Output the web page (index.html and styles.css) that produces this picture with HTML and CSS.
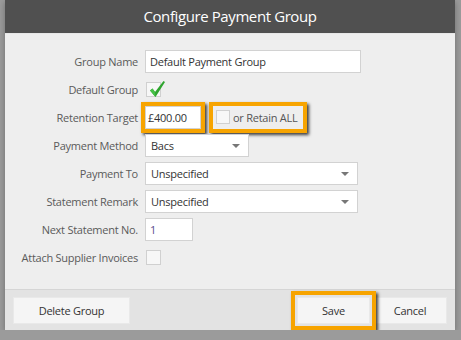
FILE: index.html
```html
<!DOCTYPE html>
<html lang="en">
<head>
  <meta charset="UTF-8">
  <title>Configure Payment Group</title>
  <link rel="stylesheet" href="styles.css">
</head>
<body>
  <div class="dialog">
    <div class="dialog-header">Configure Payment Group</div>

    <div class="dialog-body">
      <div class="form-grid">
        <div class="field-label">Group Name</div>
        <div class="field"><div class="text-input input-name">Default Payment Group</div></div>

        <div class="field-label">Default Group</div>
        <div class="field">
          <span class="checkbox">
            <svg class="tick" width="20" height="20" viewBox="0 0 20 20">
              <path d="M3 10.5 L5.5 8.5 L8 12 L16.5 1 L18 2 L8.5 17 Z" fill="#2fa52f"/>
              <path d="M3 10.5 L5.5 8.5 L8 12 L8.5 17 Z" fill="#46c046"/>
            </svg>
          </span>
        </div>

        <div class="field-label">Retention Target</div>
        <div class="field">
          <span class="highlight"><span class="text-input input-amount">£400.00</span></span>
          <span class="highlight retain-all">
            <span class="checkbox checkbox-small"></span>
            <span class="retain-text">or Retain ALL</span>
          </span>
        </div>

        <div class="field-label">Payment Method</div>
        <div class="field">
          <div class="select select-short">Bacs<span class="caret"></span></div>
        </div>

        <div class="field-label">Payment To</div>
        <div class="field">
          <div class="select select-long">Unspecified<span class="caret"></span></div>
        </div>

        <div class="field-label">Statement Remark</div>
        <div class="field">
          <div class="select select-long">Unspecified<span class="caret"></span></div>
        </div>

        <div class="field-label">Next Statement No.</div>
        <div class="field"><div class="text-input input-number">1</div></div>

        <div class="field-label">Attach Supplier Invoices</div>
        <div class="field"><span class="checkbox"></span></div>
      </div>
    </div>

    <div class="dialog-footer">
      <button class="btn btn-delete">Delete Group</button>
      <div class="footer-right">
        <button class="btn btn-save">Save</button>
        <button class="btn btn-cancel">Cancel</button>
      </div>
    </div>
  </div>
</body>
</html>
```

FILE: styles.css
```css
body {
  margin: 0;
  background-color: #9b9b9b; /* grey page behind the dialog */
  font-family: 'Open Sans', 'Noto Sans', sans-serif;
  letter-spacing: -0.25px;
}

.dialog {
  width: 450px;
  margin: 0 5px;
  background-color: #eeeeee;
  box-shadow: 0 2px 6px rgba(0, 0, 0, 0.3);
}

.dialog-header {
  height: 34px;
  line-height: 33px;
  background-color: #505050;
  color: #ffffff;
  font-size: 15px;
  letter-spacing: -0.4px;
  text-align: center;
  border-bottom: 1px solid #e6e6e6;
  box-sizing: border-box;
}

.dialog-body {
  height: 255px;
  padding-top: 13px;
  box-sizing: border-box;
}

.form-grid {
  display: grid;
  grid-template-columns: 133px 1fr;
  grid-auto-rows: 28px;
  column-gap: 7px;
  align-items: center;
}

.field-label {
  text-align: right;
  font-size: 11px;
  color: #5a5a5a;
}

.field {
  display: flex;
  align-items: center;
  gap: 8px;
}

.text-input,
.select {
  height: 23px;
  line-height: 21px;
  box-sizing: border-box;
  background-color: #ffffff;
  border: 1px solid #d2d2d2;
  padding: 0 4px;
  font-size: 11px;
  color: #333333;
}

.input-name {
  width: 216px;
}

.input-amount {
  display: block;
  width: 56px;
  padding: 0 2px;
}

.input-number {
  width: 48px;
  color: #5b4c8c;
}

.select {
  position: relative;
  padding-left: 5px;
}

.select-short {
  width: 104px;
}

.select-long {
  width: 213px;
}

.caret {
  position: absolute;
  right: 8px;
  top: 9px;
  border-left: 4px solid transparent;
  border-right: 4px solid transparent;
  border-top: 4px solid #777777;
}

.checkbox {
  position: relative;
  display: inline-block;
  width: 15px;
  height: 15px;
  margin-left: 1px;
  box-sizing: border-box;
  background-color: #f7f7f7;
  border: 1px solid #d0d0d0;
}

.checkbox-small {
  width: 14px;
  height: 14px;
  margin-left: 0;
}

.tick {
  position: absolute;
  left: 0;
  top: -3px;
}

/* orange call-out boxes drawn over the form */
.highlight {
  position: relative;
  display: inline-flex;
  align-items: center;
}

.highlight::after {
  content: "";
  position: absolute;
  top: -4px;
  bottom: -4px;
  left: -4px;
  right: -4px;
  border: 4px solid #f7a400;
  box-shadow: 2px 2px 3px rgba(0, 0, 0, 0.75);
  pointer-events: none;
}

.retain-all {
  height: 23px;
  width: 90px;
  margin-left: 4px;
  gap: 3px;
  padding-left: 3px;
  box-sizing: border-box;
}

.retain-text {
  font-size: 11px;
  color: #555555;
}

.dialog-footer {
  display: flex;
  justify-content: space-between;
  align-items: center;
  height: 41px;
  padding: 0 8px;
  box-sizing: border-box;
  background-color: #e3e3e3;
  border-top: 1px solid #d5d5d5;
}

.footer-right {
  display: flex;
  gap: 3px;
}

.btn {
  height: 27px;
  margin-top: 1px;
  background-color: #f5f5f5;
  border: 1px solid #e9e9e9;
  font-family: 'Open Sans', 'Noto Sans', sans-serif;
  font-size: 11px;
  letter-spacing: -0.25px;
  color: #333333;
  padding: 0;
}

.btn-delete {
  width: 117px;
}

.btn-save {
  position: relative;
  width: 73px;
}

.btn-save::after {
  content: "";
  position: absolute;
  top: -7px;
  bottom: -7px;
  left: -7px;
  right: -7px;
  border: 4px solid #f7a400;
  box-shadow: 2px 2px 3px rgba(0, 0, 0, 0.75);
}

.btn-cancel {
  width: 74px;
}
```
